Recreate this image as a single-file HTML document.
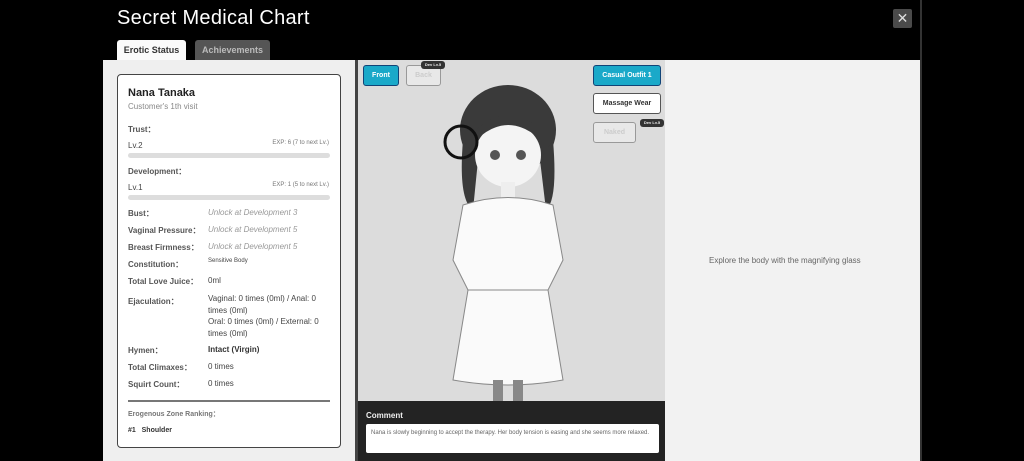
<!DOCTYPE html>
<html><head><meta charset="utf-8"><style>
*{margin:0;padding:0;box-sizing:border-box}
body{width:1024px;height:461px;background:#000;font-family:"Liberation Sans",sans-serif;position:relative;overflow:hidden}
.a{position:absolute}
.title{left:117px;top:7px;color:#fff;font-size:20px;letter-spacing:.3px}
.tab{top:40px;height:20px;font-size:9px;font-weight:bold;text-align:center;line-height:20px;border-radius:3px 3px 0 0}
.card{left:117px;top:74px;width:224px;height:374px;background:#fff;border:1.5px solid #444;border-radius:4px}
.t{position:absolute;font-size:8px;color:#555;font-weight:bold}
.v{position:absolute;font-size:8px;color:#444}
.i{position:absolute;font-size:8px;color:#999;font-style:italic}
.bar{position:absolute;left:10px;width:202px;height:5px;background:#ddd;border-radius:3px}
.btn{position:absolute;font-size:7px;font-weight:bold;text-align:center;border-radius:3px}
</style></head><body>
<div class="a" style="left:920px;top:0;width:2px;height:461px;background:#333"></div>
<div class="a title">Secret Medical Chart</div>
<div class="a" style="left:893px;top:9px;width:19px;height:19px;background:#4a4a4a;border-radius:2px;color:#ddd;font-size:14px;text-align:center;line-height:19px">✕</div>
<div class="a tab" style="left:117px;width:69px;background:#fafafa;color:#333">Erotic Status</div>
<div class="a tab" style="left:195px;width:75px;background:#555;color:#bbb">Achievements</div>
<div class="a" style="left:103px;top:60px;width:252px;height:401px;background:#efefef"></div>
<div class="a" style="left:355px;top:60px;width:3px;height:401px;background:#444"></div>
<div class="a" style="left:358px;top:60px;width:307px;height:341px;background:#dcdcdc"></div>
<div class="a" style="left:358px;top:401px;width:307px;height:60px;background:#232323"></div>
<div class="a" style="left:665px;top:60px;width:255px;height:401px;background:#f2f2f2"></div>
<div class="a" style="left:709px;top:256px;font-size:8px;color:#666">Explore the body with the magnifying glass</div>

<div class="a card">
<div class="t" style="left:10px;top:12px;font-size:11px;color:#222">Nana Tanaka</div>
<div class="v" style="left:10px;top:27px;color:#888">Customer's 1th visit</div>
<div class="t" style="left:10px;top:49px">Trust：</div>
<div class="v" style="left:10px;top:66px">Lv.2</div>
<div class="v" style="right:11px;top:65px;font-size:6px;color:#777">EXP: 6 (7 to next Lv.)</div>
<div class="bar" style="top:78px"></div>
<div class="t" style="left:10px;top:91px">Development：</div>
<div class="v" style="left:10px;top:108px">Lv.1</div>
<div class="v" style="right:11px;top:107px;font-size:6px;color:#777">EXP: 1 (5 to next Lv.)</div>
<div class="bar" style="top:120px"></div>
<div class="t" style="left:10px;top:133px">Bust：</div><div class="i" style="left:90px;top:133px">Unlock at Development 3</div>
<div class="t" style="left:10px;top:150px">Vaginal Pressure：</div><div class="i" style="left:90px;top:150px">Unlock at Development 5</div>
<div class="t" style="left:10px;top:167px">Breast Firmness：</div><div class="i" style="left:90px;top:167px">Unlock at Development 5</div>
<div class="t" style="left:10px;top:184px">Constitution：</div><div class="v" style="left:90px;top:183px;font-size:6px">Sensitive Body</div>
<div class="t" style="left:10px;top:201px">Total Love Juice：</div><div class="v" style="left:90px;top:201px">0ml</div>
<div class="t" style="left:10px;top:221px">Ejaculation：</div>
<div class="v" style="left:90px;top:218px;width:120px;line-height:11.7px">Vaginal: 0 times (0ml) / Anal: 0 times (0ml)<br>Oral: 0 times (0ml) / External: 0 times (0ml)</div>
<div class="t" style="left:10px;top:270px">Hymen：</div><div class="v" style="left:90px;top:270px;font-weight:bold;color:#333">Intact (Virgin)</div>
<div class="t" style="left:10px;top:287px">Total Climaxes：</div><div class="v" style="left:90px;top:287px">0 times</div>
<div class="t" style="left:10px;top:304px">Squirt Count：</div><div class="v" style="left:90px;top:304px">0 times</div>
<div class="a" style="left:10px;top:325px;width:202px;height:1.5px;background:#777"></div>
<div class="t" style="left:10px;top:334px;font-size:7px;color:#777">Erogenous Zone Ranking：</div>
<div class="t" style="left:10px;top:352px;font-size:7px;color:#333">#1&nbsp;&nbsp;&nbsp;Shoulder</div>
</div>

<svg class="a" style="left:358px;top:60px" width="307" height="341">
<ellipse cx="150" cy="70" rx="48" ry="45" fill="#3a3a3a"/>
<path d="M105 80 Q100 140 115 150 L120 100Z M195 80 Q200 140 188 150 L182 100Z" fill="#3a3a3a"/>
<ellipse cx="150" cy="95" rx="33" ry="32" fill="#f4f4f4"/>
<path d="M118 80 Q150 50 183 80 L183 70 Q150 40 118 70Z" fill="#3a3a3a"/>
<circle cx="137" cy="95" r="5" fill="#555"/><circle cx="163" cy="95" r="5" fill="#555"/>
<rect x="143" y="122" width="14" height="18" fill="#eee"/>
<path d="M105 145 Q150 130 195 145 L205 200 L190 230 Q150 235 110 230 L95 200Z" fill="#fafafa" stroke="#888"/>
<path d="M110 230 L95 320 Q150 330 205 320 L190 230Z" fill="#fafafa" stroke="#888"/>
<path d="M140 320 L140 341 M160 320 L160 341" stroke="#888" stroke-width="10"/>
<circle cx="103" cy="82" r="16" fill="none" stroke="#111" stroke-width="3"/>
</svg>
<div class="btn" style="left:363px;top:65px;width:36px;height:21px;background:#1aa9c9;color:#fff;border:1px solid #147;line-height:20px">Front</div>
<div class="btn" style="left:406px;top:65px;width:35px;height:21px;background:#e8e8e8;color:#ccc;border:1px solid #999;line-height:20px">Back</div>
<div class="btn" style="left:421px;top:61px;width:24px;height:8px;background:#333;color:#eee;font-size:4px;line-height:8px">Dev Lv.5</div>
<div class="btn" style="left:593px;top:65px;width:68px;height:21px;background:#1aa9c9;color:#fff;border:1px solid #147;line-height:20px">Casual Outfit 1</div>
<div class="btn" style="left:593px;top:93px;width:68px;height:21px;background:#fff;color:#333;border:1px solid #555;line-height:20px">Massage Wear</div>
<div class="btn" style="left:593px;top:122px;width:43px;height:21px;background:#e8e8e8;color:#ccc;border:1px solid #999;line-height:20px">Naked</div>
<div class="btn" style="left:640px;top:119px;width:24px;height:8px;background:#333;color:#eee;font-size:4px;line-height:8px">Dev Lv.5</div>

<div class="a" style="left:366px;top:411px;font-size:8px;font-weight:bold;color:#eee">Comment</div>
<div class="a" style="left:366px;top:424px;width:293px;height:29px;background:#fff;border-radius:2px;font-size:6px;color:#666;padding:5px 5px;line-height:9px">Nana is slowly beginning to accept the therapy. Her body tension is easing and she seems more relaxed.</div>
</body></html>
